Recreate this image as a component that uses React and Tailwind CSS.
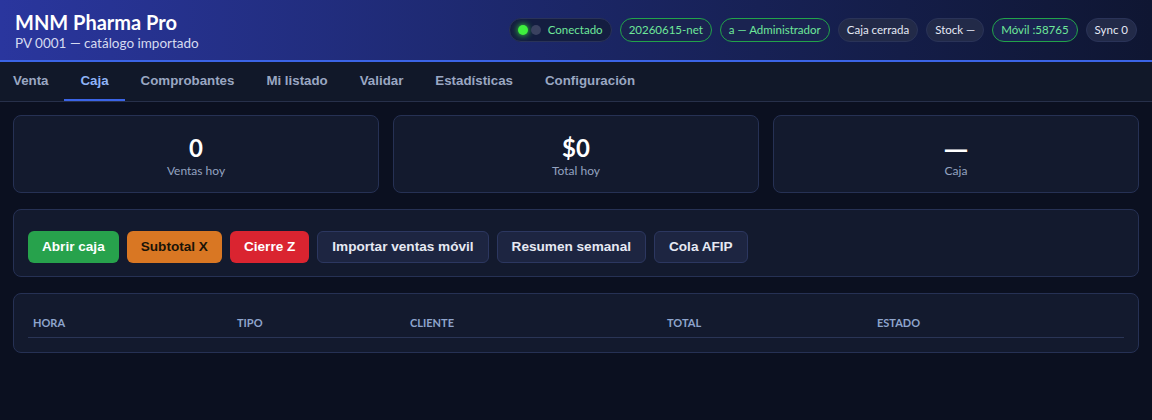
import { useState } from "react"

const tabs = ["Venta", "Caja", "Comprobantes", "Mi listado", "Validar", "Estadísticas", "Configuración"]

const stats = [
  { value: "0", label: "Ventas hoy" },
  { value: "$0", label: "Total hoy" },
  { value: "—", label: "Caja", dash: true },
]

const columns = [
  { name: "Hora", w: "w-[204px]" },
  { name: "Tipo", w: "w-[173px]" },
  { name: "Cliente", w: "w-[257px]" },
  { name: "Total", w: "w-[210px]" },
  { name: "Estado", w: "" },
]

function Pill({ children, ok }) {
  return (
    <span
      className={
        "h-6 px-[8px] flex items-center rounded-full text-[11.5px] border " +
        (ok
          ? "border-[#22a34a] text-[#6ee79a] bg-[#1a2350]"
          : "border-[#2a3358] text-[#e5e9f5] bg-[#222a48]")
      }
    >
      {children}
    </span>
  )
}

const btn = "h-8 px-[14px] rounded-md text-[13.6px] font-bold"
const btnDark = btn + " bg-[#1d2541] border border-[#2c3760] text-[#e6e9f3]"

export default function App() {
  const [tab, setTab] = useState("Caja")

  return (
    <div className="min-h-[420px] bg-[#0b1020] font-['Lato',sans-serif]">
      <header className="h-[62px] px-[15px] flex items-center justify-between bg-gradient-to-r from-[#2a369e] via-[#1b2666] to-[#0f1632] border-b-2 border-[#3b64e6]">
        <div className="pt-[2px]">
          <h1 className="text-[20px] font-bold text-white leading-[24px]">MNM Pharma Pro</h1>
          <p className="text-[13.5px] text-[#d5daf0] leading-[18px]">PV 0001 — catálogo importado</p>
        </div>
        <div className="flex items-center gap-2">
          <span className="h-6 pl-2 pr-[8px] flex items-center rounded-full text-[11.5px] border border-[#2a3358] bg-[#141d40] text-[#6ee79a]">
            <span className="w-[10px] h-[10px] rounded-full bg-[#3ef03e] shadow-[0_0_6px_#3ef03e]" />
            <span className="w-[10px] h-[10px] rounded-full bg-[#3a4160] ml-[3px] mr-[7px]" />
            Conectado
          </span>
          <Pill ok>20260615-net</Pill>
          <Pill ok>a — Administrador</Pill>
          <Pill>Caja cerrada</Pill>
          <Pill>Stock —</Pill>
          <Pill ok>Móvil :58765</Pill>
          <Pill>Sync 0</Pill>
        </div>
      </header>

      <nav className="h-[40px] flex bg-[#111829] border-b border-[#27304a] font-['Liberation_Sans',sans-serif]">
        <div className="flex -ml-[3px]">
          {tabs.map((t) => (
            <button
              key={t}
              onClick={() => setTab(t)}
              className={
                "px-4 text-[13.3px] font-bold border-b-2 " +
                (t === tab ? "text-[#8fb3f7] border-[#3b64e6]" : "text-[#9aa7c2] border-transparent")
              }
            >
              {t}
            </button>
          ))}
        </div>
      </nav>

      <main className="p-[13px] flex flex-col gap-4">
        <div className="grid grid-cols-3 gap-[14px]">
          {stats.map((s) => (
            <div
              key={s.label}
              className="h-[78px] pt-[4px] rounded-lg bg-[#131a2e] border border-[#263154] flex flex-col items-center justify-center"
            >
              <div
                className={
                  "text-2xl font-bold text-white leading-[30px] " +
                  (s.dash ? "font-['Noto_Sans',sans-serif]" : "")
                }
              >
                {s.value}
              </div>
              <div className="text-xs text-[#94a3c0] leading-4">{s.label}</div>
            </div>
          ))}
        </div>

        <div className="rounded-lg bg-[#131a2e] border border-[#263154] px-[14px] pt-[21px] pb-[13px] flex gap-2 font-['Liberation_Sans',sans-serif]">
          <button className={btn + " bg-[#27a24c] text-white"}>Abrir caja</button>
          <button className={btn + " bg-[#d97723] text-[#1a1408]"}>Subtotal X</button>
          <button className={btn + " bg-[#da2430] text-white"}>Cierre Z</button>
          <button className={btnDark}>Importar ventas móvil</button>
          <button className={btnDark}>Resumen semanal</button>
          <button className={btnDark}>Cola AFIP</button>
        </div>

        <div className="rounded-lg bg-[#131a2e] border border-[#263154] px-[14px] pt-[15px] pb-[14px]">
          <table className="w-full border-collapse">
            <thead>
              <tr className="border-b border-[#2a3556]">
                {columns.map((c) => (
                  <th
                    key={c.name}
                    className={c.w + " text-left px-[5px] py-[7px] leading-[14px] text-[11px] font-bold uppercase text-[#8ea4cc]"}
                  >
                    {c.name}
                  </th>
                ))}
              </tr>
            </thead>
            <tbody />
          </table>
        </div>
      </main>
    </div>
  )
}
